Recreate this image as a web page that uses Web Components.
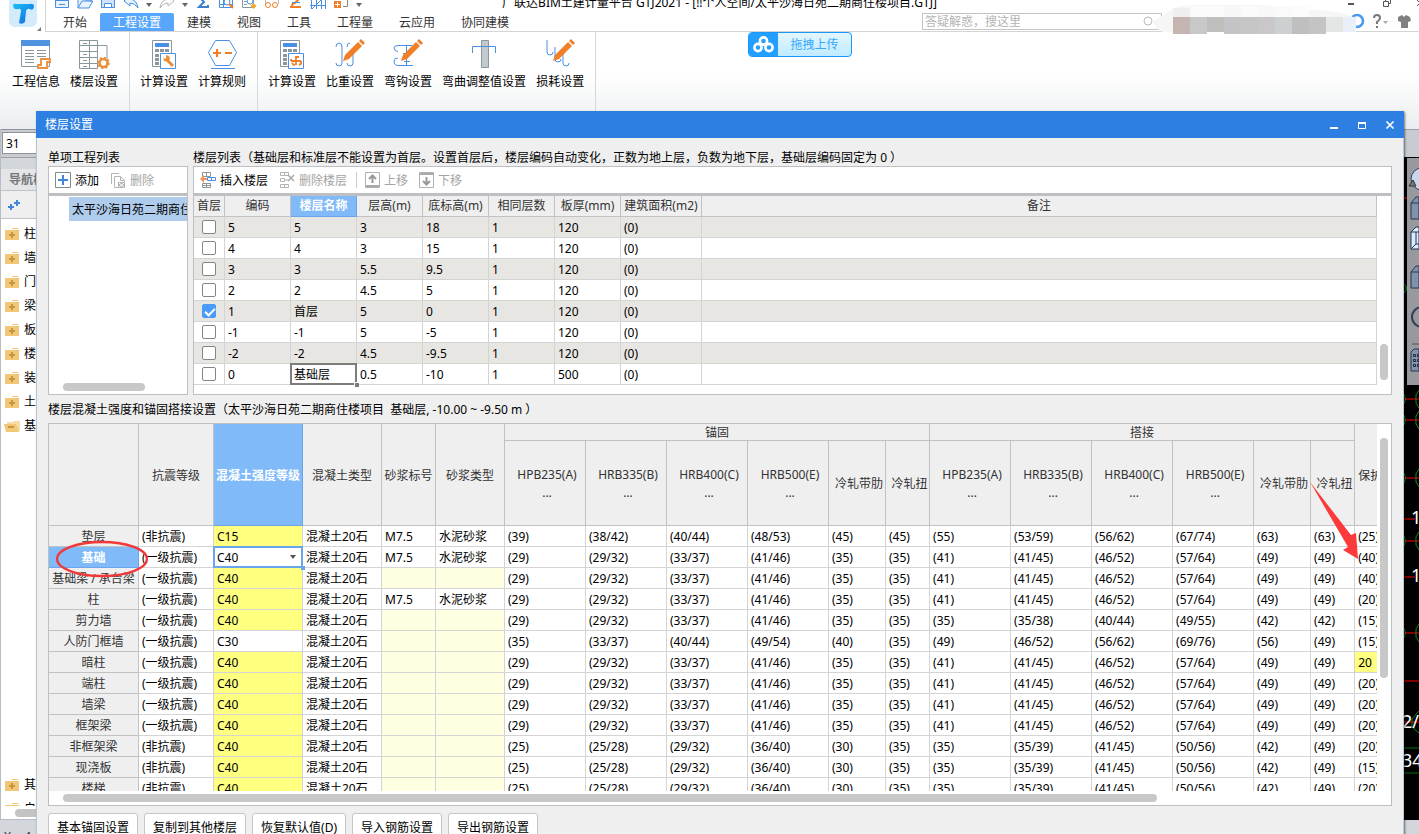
<!DOCTYPE html>
<html lang="zh-CN">
<head>
<meta charset="utf-8">
<title>广联达BIM土建计量平台 GTJ2021</title>
<style>
html,body{margin:0;height:100%;overflow:hidden}
body{font:12px/18px "Noto Sans","Noto Sans CJK SC",sans-serif;color:#000;background:#fff}
</style>
</head>
<body>
<app-shell></app-shell>
<script>
const RESET = `*{box-sizing:border-box}button,input,select{font:inherit;color:inherit;margin:0}svg{display:block;flex:none}:host([hidden]){display:none}`;
function define(name, css, html, setup) {
  customElements.define(name, class extends HTMLElement {
    connectedCallback() {
      if (this.shadowRoot) return;
      const root = this.attachShadow({ mode: 'open' });
      const markup = typeof html === 'function' ? html(this) : html;
      root.innerHTML = `<style>${RESET}${css}</style>${markup}`;
      if (setup) setup(root, this);
    }
  });
}
const svg = (w, h, body) => `<svg width="${w}" height="${h}" viewBox="0 0 ${w} ${h}" fill="none" aria-hidden="true">${body}</svg>`;
const B = '#4a90e2', O = '#f07f28', G = '#8b979e';
const pencil = `<path d="M9 22l2-6L24 3l4 4L15 20z" fill="${O}"/><path d="M25 2l2-2 4 4-2 2z" fill="${O}"/>`;
const calc = `<path d="M2.500 1.500h19v26h-19z" stroke="${G}" fill="#fff"/><path d="M5 4h14v4H5z" fill="${B}"/><path d="M5 10h4v3H5zM10 10h4v3h-4zM15 10h4v3h-4zM5 15h4v3H5zM5 19h4v3H5zM5 23h4v3H5z" fill="${G}"/><path d="M10.500 14.500h15v15h-15z" fill="#fff" stroke="${B}"/>`;

const ICONS = {
  info: svg(32, 32, `<path d="M1.500 1.500h28v26h-28z" fill="#fff" stroke="${G}"/><path d="M1 1h29v6H1z" fill="#4f92df"/><path d="M5 11.500h9M5 14.500h9M5 17.500h9M5 20.500h9M5 23.500h9M17 11.500h9M17 14.500h9M17 17.500h9" stroke="${G}"/><path d="M21 20h9v3h-3v6H18v-3h3z" fill="#fff" stroke="#e8903a" stroke-width="1.800"/>`),
  floors: svg(32, 32, `<path d="M1.500 1.500h18v28h-18zM1.500 6.500h18M1.500 12.500h18M1.500 18.500h18M1.500 24.500h18M11.500 1.500v28M20 6.500h9v14" stroke="${G}"/><path d="M5 4.500h4M5 15.500h4M5 21.500h4M5 27.500h4" stroke="${G}"/><circle cx="25.500" cy="24" r="4" fill="#fff" stroke="#e8903a" stroke-width="2.600"/><circle cx="25.500" cy="24" r="5.400" stroke="#e8903a" stroke-width="1.800" stroke-dasharray="2 2.200"/>`),
  calcSet: svg(28, 32, calc + `<path d="M16 20l7 7" stroke="#e8903a" stroke-width="3"/><path d="M13 18l1 4 4 1 2-3-1-3-3-1v3l-1 1z" fill="#e8903a"/>`),
  calcBar: svg(28, 32, calc + `<path d="M18 17v9M21 18h-3M13 22h10M14 24q1 2 3 2M21 26q3-1 2-4M13 20v2" stroke="${O}" stroke-width="1.800"/>`),
  rule: svg(32, 32, `<path d="M9.500 1.500h14l7 12-7 13h-14l-7-13z" stroke="${B}"/><path d="M5 29.500h24" stroke="${B}"/><path d="M7 14h8M11 10v8M19 14h7" stroke="${O}" stroke-width="2.200"/>`),
  weight: svg(32, 32, `<path d="M2 8q0-4 3-4t3 4v16q0 3-3 3t-3-3M13 8q0-4 3-4M19 12v12q0 3-3 3t-3-3" stroke="${B}"/>` + pencil),
  hook: svg(32, 32, `<path d="M20 6.500H6Q2 6.500 2 9t4 4M2 22q0-3 4-3M2 22q0 4.500 4 4.500h15M14.500 6v20M11 14.500h6M12 22.500h6" stroke="${B}"/>` + pencil),
  bend: svg(32, 32, `<path d="M13.500 1.500h7v27h-7z" fill="#c3c9cc" stroke="${G}"/><path d="M4.500 14V7.500h23V14" stroke="${B}"/>`),
  loss: svg(32, 32, `<path d="M3 1v12q0 3 3 3t3-3M11 8v12q0 3 3 3t3-3M19 14v10q0 3 3 3t3-3" stroke="${B}"/>` + pencil),
  add: svg(16, 16, `<path d="M.5.5h15v15H.5z" stroke="#7d8b93"/><path d="M3 8h10M8 3v10" stroke="#3f86dc" stroke-width="2"/>`),
  del: svg(16, 16, `<path d="M9 1.500H1.500V12M4.500 4.500h6l4 4v7h-10zM10.500 4.500v4h4" stroke="#b4b4b4"/><path d="M8 10h7v6H8z" fill="#b4b4b4"/><path d="M9 11l5 4M14 11l-5 4" stroke="#fff"/>`),
  insert: svg(16, 16, `<path d="M2.500.5h8v4h-8zM6.500.5v4M2.500 11.500h8v4h-8zM6.500 11v4M2.500 13.500h8" stroke="#8b979e"/><path d="M0 7l4-4v3h3v2H4v3z" fill="#f5935a"/><path d="M7.500 5.500h8v3h-8zM11.500 5.500v3" stroke="${B}"/>`),
  delFloor: svg(16, 16, `<path d="M1.500.5h8v3h-8zM5.500.5v3M1.500 12.500h8v3h-8zM5.500 12v3M1.500 6.500h4v3h-4zM6 8h3" stroke="#b4b4b4"/><path d="M9 3l6 6M15 3l-6 6" stroke="#aaa" stroke-width="1.600"/>`),
  up: svg(15, 16, `<path d="M.5.5h14v15H.5z" stroke="#b0b0b0"/><path d="M1 13h13v2H1z" fill="#aaa"/><path d="M7.500 11V4M4 7l3.500-3.500L11 7" stroke="#999" stroke-width="2"/>`),
  down: svg(15, 16, `<path d="M.5.5h14v15H.5z" stroke="#b0b0b0"/><path d="M1 1h13v2H1z" fill="#aaa"/><path d="M7.500 5v7M4 9l3.500 3.500L11 9" stroke="#999" stroke-width="2"/>`),
  folder: svg(16, 16, `<path d="M1 4h14v10H1z" fill="#f0c878"/><path d="M8 3V2h6v1z" fill="#f0c878"/><path d="M5 9h6M8 6v6" stroke="#c8963c" stroke-width="2"/>`),
  folderOpen: svg(16, 16, `<path d="M3 4h6l1-1h6v10H3z" fill="#f6dba6"/><path d="M0 6h12l3 8H2z" fill="#f0c878"/><path d="M4 9h6" stroke="#c8963c" stroke-width="2"/>`)
};

/* Ribbon */
define('ribbon-item',
  `:host{display:block}button{display:flex;flex-direction:column;align-items:center;gap:2px;border:0;background:none;padding:0 5px;white-space:nowrap}`,
  el => `<button type="button">${ICONS[el.getAttribute('icon')]}<slot></slot></button>`);

define('ribbon-group',
  `:host{display:flex;padding:7px 6px 0 5px;border-right:1px solid #d5d8da}`, `<slot></slot>`);

define('ribbon-bar',
  `:host{display:flex;height:97px;padding-left:2px;background:linear-gradient(#fff 45%,#eaedef)}`,
  `<ribbon-group><ribbon-item icon="info">工程信息</ribbon-item><ribbon-item icon="floors">楼层设置</ribbon-item></ribbon-group>
   <ribbon-group><ribbon-item icon="calcSet">计算设置</ribbon-item><ribbon-item icon="rule">计算规则</ribbon-item></ribbon-group>
   <ribbon-group><ribbon-item icon="calcBar">计算设置</ribbon-item><ribbon-item icon="weight">比重设置</ribbon-item><ribbon-item icon="hook">弯钩设置</ribbon-item><ribbon-item icon="bend">弯曲调整值设置</ribbon-item><ribbon-item icon="loss">损耗设置</ribbon-item></ribbon-group>`);

/* Quick access row with the window title */
const caret = svg(6, 16, `<path d="M0 9h6l-3 4z" fill="#666"/>`);
define('quick-bar',
  `:host{display:flex;align-items:center;height:20px;margin-top:-8px;padding:0 0 0 8px;position:relative}
   .icons{display:flex;gap:7px}.title{flex:1;text-align:center;white-space:nowrap;padding:1px 268px 0 0}
   .win{display:flex;gap:20px;margin-right:-6px}`,
  `<div class="icons">
   ${svg(16,16,`<path d="M1.500 1.500h13v12h-13zM1.500 6.500h13M5 10.500h6" stroke="${B}" fill="#e8f2fd"/>`)}
   ${svg(16,16,`<path d="M1 14V4h6l1 2h6v2M1 14l4-7h11l-4 7z" stroke="${B}" fill="#e8f2fd"/>`)}
   ${svg(16,16,`<path d="M1.500 1.500h13v12h-13z" stroke="${B}" fill="#cfe3fa"/><path d="M4.500 9.500h7v4h-7z" fill="#fff" stroke="${B}"/>`)}
   ${svg(16,16,`<path d="M1 7l6-5v3q7 1 8 9-3-5-8-5v3z" stroke="${B}" fill="#e8f2fd"/>`)}
   ${caret}
   ${svg(16,16,`<path d="M15 7L9 2v3Q2 6 1 14q3-5 8-5v3z" stroke="#b5b5b5"/>`)}
   ${caret}
   ${svg(16,16,`<path d="M13 3H4l5 5-5 5h9v-2" stroke="#3d7fcf" stroke-width="2"/>`)}
   ${svg(16,16,`<path d="M1.500 1.500h13v12h-13zM1 10.500h13M5.500 1v13" stroke="${B}"/><circle cx="9" cy="8" r="3" fill="#fff" stroke="${B}"/><path d="M11 10l4 4" stroke="${O}" stroke-width="2"/>`)}
   ${svg(16,16,`<path d="M1.500 1.500h11v12h-11zM3 7.500h3M3 10.500h3" stroke="${G}"/><circle cx="9" cy="7" r="3" fill="#fff" stroke="${B}"/><path d="M12.500 9l3 3-3 3-3-3z" fill="#f5a623"/>`)}
   ${svg(16,16,`<path d="M1.500 10V3.500h13V10" stroke="#bbb"/><circle cx="4" cy="11" r="2.500" stroke="${O}"/><circle cx="11" cy="11" r="2.500" stroke="${O}"/>`)}
   ${svg(16,16,`<path d="M3 13h11M5 12q0-3 3-3l4-4" stroke="${O}" stroke-width="2"/><path d="M5 8.500h8" stroke="${B}"/>`)}
   ${svg(16,16,`<path d="M1.500 1v14M6.500 1v14M11.500 1v14M15.500 1v14M0 5.500h16M0 11.500h16M2 15L15 2" stroke="${B}"/>`)}
   ${svg(16,16,`<path d="M5 1.500h9.500v11H10" stroke="#888"/><path d="M1 7h7v7H1z" fill="${O}"/><path d="M2 10.500h5M4.500 8v5" stroke="#fff"/>`)}
   ${caret}</div>
   <div class="title">广联达BIM土建计量平台 GTJ2021 - [!!个人空间/太平沙海日苑二期商住楼项目.GTJ]</div>
   <div class="win">${svg(16,16,`<path d="M3 10h6" stroke="#555" stroke-width="2"/>`)}${svg(16,16,`<path d="M2.500 7.500h5v5h-5zM4.500 7V4.500h5v5H8" stroke="#555"/>`)}${svg(8,16,`<path d="M0 6l6 6M6 6l-6 6" stroke="#555"/>`)}</div>`);

define('menu-tab',
  `:host{display:block}a{display:block;height:18px;line-height:20px;padding:0 13px;color:#333;text-decoration:none;white-space:nowrap}
   :host([active]) a{background:#58a6fb;color:#fff;border-radius:2px 2px 0 0}`,
  `<a href="#"><slot></slot></a>`);

const mosaicColors = ['#c4b5b1','#c8c8c9','#bebfbd','#c3c4c5','#c6c6c7','#c9c7c9','#cdd0d1','#bfbfc0','#c4c4c4','#e3e6e5','#e9f0fb'];
const mosaicTops = ['#efefef','#fafafa','#fbfbfb','#f7f7f7','#fbfbfb','#f8f8f8','#fafafa','#fcfcfc'];
define('menu-row',
  `:host{display:flex;height:19px;padding-left:4px;border-bottom:1px solid #d4d4d4;position:relative}
   nav{display:flex;flex:1}
   .search{width:240px;height:17px;border:1px solid #c4c4c4;display:flex;align-items:center;padding-right:2px}
   input{border:0;outline:0;background:none;width:100%;padding:1px 2px 0;height:15px}input::placeholder{color:#b4b4b4}
   .user{width:208px;position:relative}.user svg{position:absolute;left:-9px;top:-8px}
   .tools{display:flex;width:49px;gap:9px}`,
  `<nav><menu-tab>开始</menu-tab><menu-tab active>工程设置</menu-tab><menu-tab>建模</menu-tab><menu-tab>视图</menu-tab><menu-tab>工具</menu-tab><menu-tab>工程量</menu-tab><menu-tab>云应用</menu-tab><menu-tab>协同建模</menu-tab></nav>
   <label class="search"><input type="search" aria-label="搜索" placeholder="答疑解惑，搜这里">${svg(16,14,`<circle cx="5" cy="6" r="4" stroke="#bbb"/>`)}</label>
   <div class="user">${svg(216,30,`<circle cx="204" cy="16" r="6" stroke="#4a9af0" stroke-width="2.500"/><path d="M0 16Q12 10 20 3Q30 0 40 0H110L150 4Q190 6 200 12V26Q196 28 190 27H10Q2 24 0 16z" fill="#f6f6f6"/>` + mosaicTops.map((c,i)=>`<path d="M${20+i*17} ${i===0?3:1}h17v11h-17z" fill="${c}"/>`).join('') + mosaicColors.map((c,i)=>`<path d="M${20+i*17} 12h${i===10?13:17}v${i===2||i>8?15:17}h-${i===10?13:17}z" fill="${c}"/>`).join(''))}</div>
   <div class="tools">${svg(18,18,`<path d="M4 5q0-3 3-3t3 3q0 2-3 4v2M7 13v2" stroke="#777" stroke-width="2"/><path d="M13 8h5l-2.500 3z" fill="#aaa"/>`)}${svg(18,18,`<path d="M1 4l4-2 2 2 2-2 4 2 1 4-3 1v6H4V9L1 8z" fill="#808080"/>`)}</div>`);

define('app-header',
  `:host{display:grid;grid-template-columns:46px 1fr;height:32px}
   .logo{padding-left:9px;border-right:1px solid #d4d4d4}.main{min-width:0;display:flex;flex-direction:column;gap:1px}`,
  `<div class="logo">${svg(34,31,`<defs><linearGradient id="g" x1="0" y1="0" x2="1" y2="1"><stop stop-color="#17c3f5"/><stop offset="1" stop-color="#1560e0"/></linearGradient></defs><rect y="-8" width="28" height="35" rx="6" fill="#d3ebfa"/><path d="M4 5q1-2 4-1h13q4-1 4 3-1 4-4 2-3-1-4 2l-1 11q-3 3-6 1l2-12q0-3-3-2-5 1-5-4z" fill="url(#g)"/><path d="M32 27v4h-4z" fill="#777"/>`)}</div>
   <div class="main"><quick-bar></quick-bar><menu-row></menu-row></div>`);

define('upload-badge',
  `:host{position:absolute;left:748px;top:32px}
   button{display:flex;align-items:center;width:104px;height:25px;padding:0;border:1px solid #1b97f8;border-radius:4px;background:linear-gradient(#e4f6ff,#c0ebff);color:#35a8fa;overflow:hidden}
   .mark{background:#23a0ff;height:25px;display:flex;align-items:center;padding:0 4px}.text{flex:1}`,
  `<button type="button"><span class="mark">${svg(21,18,`<g stroke="#fff" stroke-width="2.600"><circle cx="10.500" cy="5" r="3.600"/><circle cx="5" cy="11.500" r="3.600"/><circle cx="16" cy="11.500" r="3.600"/></g>`)}</span><span class="text"><slot></slot></span></button>`);

/* Navigation panel */
define('nav-item',
  `:host{display:flex;align-items:center;height:24px;gap:4px;padding-left:3px;flex:none}`,
  el => `${ICONS[el.hasAttribute('open') ? 'folderOpen' : 'folder']}<slot></slot>`);

define('nav-panel',
  `:host{display:flex;flex-direction:column;width:160px;background:#d3d6db;border-left:1px solid #b7bcc6}
   .combo{height:28px;padding:2px 1px;border-top:1px solid #8e9196;background:#c9ccd0}
   .combo input{width:120px;height:22px;border:1px solid #8e9196;background:#fff;padding:0 3px;display:block}
   .gap{height:12px;border-top:1px solid #9da1a6}
   .head{height:22px;background:#e4e5e8;color:#777;font-weight:bold;padding:2px 8px;border-bottom:1px solid #bfc3c8}
   .tools{height:28px;background:#efefef;border-bottom:1px solid #bfc3c8;padding:6px}
   .list{flex:1;min-height:0;background:#fff;padding-top:3px;display:flex;flex-direction:column}
   .rest{margin-top:auto;height:33px;overflow:hidden}
   .bar{height:14px;background:#fff;padding:3px 0 0 14px;border-bottom:1px solid #b7bcc6}.bar div{height:8px;border-radius:4px;background:#c4c4c4}`,
  `<div class="combo"><input value="31" aria-label="图层"></div><div class="gap"></div>
   <div class="head">导航栏</div>
   <div class="tools">${svg(16,16,`<path d="M1 10h6M4 7v6M7 6h6M10 3v6" stroke="#3f86dc" stroke-width="2"/>`)}</div>
   <div class="list">${['柱','墙','门','梁','板','楼','装','土'].map(t=>`<nav-item>${t}</nav-item>`).join('')}<nav-item open>基</nav-item>
   <div class="rest"><nav-item>其</nav-item><nav-item>自</nav-item></div></div>
   <div class="bar"><div></div></div>`);

/* Drawing canvas strip at the right edge */
const hex = y => `<path d="M0 ${y-5}q3 5 0 10M15 ${y-9}l-3 5v8l3 5" stroke="#0a8a1a"/>`;
define('cad-view',
  `:host{flex:1;display:flex;flex-direction:column;align-items:flex-end;background:#c8cbd1;border-top:1px solid #9da1a6}
   .canvas{flex:1;min-height:0;width:100%;margin-top:27px;background:#000;display:flex;justify-content:flex-end;overflow:hidden}
   text{font:18px "Noto Sans",sans-serif;fill:#fff}`,
  `<div class="canvas">${svg(15,664,
    [242,263,321,384,476].map(y=>`<path d="M0 ${y}h15" stroke="#f00"/>${hex(y)}`).join('') +
    `<path d="M0 41h3M0 362h11M0 420h11M0 524h15" stroke="#f00"/><path d="M0 565h15" stroke="#f00"/><path d="M0 591h15M0 616h15" stroke="#0a6a1a"/><path d="M15 554l-7 8v8l7 6" stroke="#0a8a1a"/><path d="M0 127q5 4 0 9" stroke="#0a8a1a"/>
     <text x="7" y="367">1</text><text x="7" y="425">1</text><text x="-2" y="571">2/</text><text x="-2" y="610">34</text>
     <path d="M3 1h12v227H3z" fill="#97999d"/>
     <circle cx="18" cy="22" r="11" fill="#c7d7ec" stroke="#333e55"/><path d="M5 29l4-6 3 6z" fill="#777" stroke="#333"/>
     <path d="M7 46l5-6h3v22H7zM7 46h8" fill="#8093ad" stroke="#2a3550"/><path d="M7 75l5-5h3v22H7z" fill="#d6ebff" stroke="#2a3550"/><path d="M7 75h8M12 75v12l-5 5M12 87h3" stroke="#2a3550"/>
     <path d="M7 115l5-6h3v22H7zM7 115h8" fill="#8093ad" stroke="#2a3550"/><circle cx="18" cy="160" r="10" stroke="#333e55" stroke-width="2"/><path d="M8 187h7" stroke="#555"/>
     <path d="M7 195l3-3h5v22H7z" fill="#8093ad" stroke="#2a3550"/><path d="M9.500 197.500h2v2h-2zM9.500 202.500h2v2h-2zM9.500 207.500h2v2h-2zM13.500 197.500h2v2h-2zM13.500 202.500h2v2h-2zM13.500 207.500h2v2h-2z" stroke="#1f2940"/>`)}</div>`);

/* Dialog parts */
define('tool-button',
  `:host{display:block}button{display:flex;align-items:center;gap:4px;height:22px;padding:0 5px 0 3px;border:0;background:none;white-space:nowrap}button:disabled{color:#a4a4a4}span{padding-top:2px}`,
  el => `<button type="button"${el.hasAttribute('disabled') ? ' disabled' : ''}>${ICONS[el.getAttribute('icon')]}<span><slot></slot></span></button>`);

define('tool-strip',
  `:host{display:flex;align-items:center;gap:3px;height:28px;padding-left:3px;background:#fff;border:1px solid #bdbfc2;overflow:hidden}`, `<slot></slot>`);

define('project-list',
  `:host{display:flex;flex-direction:column;height:201px;border:1px solid #bdbfc2;border-top-width:2px;background:#fff;overflow:hidden}
   .node{margin:1px 0 0 20px;height:24px;line-height:24px;padding:1px 0 0 3px;background:#b0cced;white-space:nowrap;overflow:hidden}
   .thumb{margin:auto 0 3px 14px;width:82px;height:8px;border-radius:4px;background:#c8c8c8}`,
  `<div class="node">太平沙海日苑二期商住</div><div class="thumb"></div>`);

const floors = [
  ['5','5','3','18'],['4','4','3','15'],['3','3','5.5','9.5'],['2','2','4.5','5'],['1','首层','5','0'],['-1','-1','5','-5'],['-2','-2','4.5','-9.5'],['0','基础层','0.5','-10']
];
const TABLE = `table{border-collapse:separate;border-spacing:0;table-layout:fixed}
 th,td{padding:2px 0 0 3px;border:0 solid #d4d4d4;border-width:0 1px 1px 0;height:21px;line-height:18px;text-align:left;white-space:nowrap;overflow:hidden}
 th{background:#efefef;color:#333;font-weight:normal;text-align:center;padding:2px 0 0;border-color:#c2c2c2}
 .sel{background:#80baf9;color:#fff;font-weight:bold;border-color:#6aa6ee}
 .frame{background:#fff;border:1px solid #bdbfc2}.thumb{background:#c8c8c8;border-radius:4px}`;

define('floor-table',
  `${TABLE}:host{display:block}
   .frame{display:grid;grid-template-columns:minmax(0,1fr) 14px;height:201px;border-top-width:2px}
   table{width:100%;align-self:start}thead th{padding-top:0}
   tbody tr:nth-child(odd) td{background:#e8e6e2}td:first-child{padding:0}
   input{appearance:none;display:block;width:14px;height:14px;margin:0 auto;border:1px solid #858585;border-radius:2px;background:#fff;position:relative}
   input:checked{background:#4a9cf8;border-color:#4a9cf8}
   input:checked::after{content:"";position:absolute;left:4px;top:1px;width:4px;height:8px;border:solid #fff;border-width:0 2px 2px 0;transform:rotate(45deg)}
   td.current{position:relative;overflow:visible}
   td.current::before{content:"";position:absolute;inset:-1px;border:2px solid #7d7d7d;pointer-events:none}
   td.current::after{content:"";position:absolute;right:-3px;bottom:-3px;width:4px;height:4px;background:#7d7d7d;border:solid #fff;border-width:1px 0 0 1px;box-sizing:content-box}
   .thumb{width:8px;height:36px;margin:auto 3px 14px}`,
  `<div class="frame"><table><colgroup><col style="width:31px"><col style="width:66px"><col style="width:66px"><col style="width:66px"><col style="width:66px"><col style="width:66px"><col style="width:66px"><col style="width:81px"><col></colgroup>
   <thead><tr><th>首层</th><th>编码</th><th class="sel">楼层名称</th><th>层高(m)</th><th>底标高(m)</th><th>相同层数</th><th>板厚(mm)</th><th>建筑面积(m2)</th><th>备注</th></tr></thead>
   <tbody>${floors.map((f,i)=>`<tr><td><input type="checkbox" aria-label="首层 ${f[0]}"${i===4?' checked':''}></td><td>${f[0]}</td><td${i===7?' class="current"':''}>${f[1]}</td><td>${f[2]}</td><td>${f[3]}</td><td>1</td><td>${i===7?500:120}</td><td>(0)</td><td></td></tr>`).join('')}</tbody></table><div class="thumb"></div></div>`);

const first = '(29) (29/32) (33/37) (41/46) (35) (35) ';
const full = first + '(41) (41/45) (46/52) (57/64) (49) (49) ';
const plain = '(25) (25/28) (29/32) (36/40) (30) (35) (35) (35/39) (41/45) (50/56) (42) (49) ';
const members = [
  ['垫层','(非抗震)','C15',1,'(39) (38/42) (40/44) (48/53) (45) (45) (55) (53/59) (56/62) (67/74) (63) (63) (25)'],
  ['基础','(一级抗震)','C40',1,full+'(40)'],
  ['基础梁 / 承台梁','(一级抗震)','C40',0,full+'(40)'],
  ['柱','(一级抗震)','C40',1,full+'(20)'],
  ['剪力墙','(一级抗震)','C40',0,first+'(35) (35/38) (40/44) (49/55) (42) (42) (15)'],
  ['人防门框墙','(一级抗震)','C30',0,'(35) (33/37) (40/44) (49/54) (40) (35) (49) (46/52) (56/62) (69/76) (56) (49) (15)'],
  ['暗柱','(一级抗震)','C40',0,full+'20'],
  ['端柱','(一级抗震)','C40',0,full+'(20)'],
  ['墙梁','(一级抗震)','C40',0,full+'(20)'],
  ['框架梁','(一级抗震)','C40',0,full+'(20)'],
  ['非框架梁','(非抗震)','C40',0,plain+'(20)'],
  ['现浇板','(非抗震)','C40',0,plain+'(15)'],
  ['楼梯','(非抗震)','C40',0,plain+'(20)']
];
const barHeads = ['HPB235(A)<br>...','HRB335(B)<br>...','HRB400(C)<br>...','HRB500(E)<br>...','冷轧带肋','冷轧扭'].map(h=>`<th>${h}</th>`).join('');
const memberRow = ([name,quake,grade,mortar,values]) => {
  const selected = name === '基础';
  const gradeCell = selected
    ? `<td class="edit"><select aria-label="混凝土强度等级"><option>C40</option></select></td>`
    : `<td${grade==='C30'?'':' class="changed"'}>${grade}</td>`;
  return `<tr><th${selected?' class="sel"':''}>${name}</th><td>${quake}</td>${gradeCell}<td>混凝土20石</td>` +
    (mortar ? '<td>M7.5</td><td>水泥砂浆</td>' : '<td class="na"></td><td class="na"></td>') +
    values.split(' ').map(v=>`<td${v==='20'?' class="changed"':''}>${v}</td>`).join('') + '</tr>';
};
define('anchor-table',
  `${TABLE}:host{display:flex;flex-direction:column;min-height:0}
   .frame{flex:1;min-height:0;display:grid;grid-template-columns:minmax(0,1fr) 14px;grid-template-rows:minmax(0,1fr) 14px}
   .view{overflow:hidden}table{width:1388px}
   thead tr:first-child th{height:17px;line-height:14px}thead tr:last-child th{height:85px;padding-left:4px}
   thead th[rowspan]{line-height:18px!important}th.cover{text-align:left;padding-left:3px}
   .changed{background:#ffff80}.na{background:#ffffe1}
   td.edit{position:relative;overflow:visible;padding:0}
   select{appearance:none;display:block;width:100%;height:20px;border:0;padding:2px 0 0 3px;background:#fff;outline:2px solid #68a5ea;outline-offset:-1px;border-radius:0}
   .edit::before{content:"";position:absolute;right:6px;top:8px;border:3px solid transparent;border-top:4px solid #555;border-bottom:0}
   .edit::after{content:"";position:absolute;right:-3px;bottom:-3px;width:4px;height:4px;background:#68a5ea}
   .v{width:8px;height:240px;margin:14px 3px 0}.h{height:8px;margin:3px 234px 0 14px;grid-column:1/3}`,
  `<div class="frame"><div class="view"><table><colgroup>${[90,75,89,79,54,69,81,81,81,81,57,44,81,81,81,81,57,44,82].map(w=>`<col style="width:${w}px">`).join('')}</colgroup>
   <thead><tr><th rowspan="2"></th><th rowspan="2">抗震等级</th><th rowspan="2" class="sel">混凝土强度等级</th><th rowspan="2">混凝土类型</th><th rowspan="2">砂浆标号</th><th rowspan="2">砂浆类型</th><th colspan="6">锚固</th><th colspan="6">搭接</th><th rowspan="2" class="cover">保护</th></tr><tr>${barHeads}${barHeads}</tr></thead>
   <tbody>${members.map(memberRow).join('')}</tbody></table></div><div class="thumb v"></div><div class="thumb h"></div></div>`);

define('push-button',
  `:host{display:block}button{height:28px;padding:1px 8px 0;border:1px solid #c6c6c6;border-radius:3px;background:#fff;white-space:nowrap}`,
  `<button type="button"><slot></slot></button>`);

define('floor-dialog',
  `:host{position:absolute;left:36px;right:15px;top:111px;bottom:-7px;display:flex;flex-direction:column;background:#efefef;box-shadow:1px 1px 2px rgba(0,0,0,.5)}
   header{display:flex;align-items:center;height:27px;padding:0 8px 0 9px;background:#2d7fe2;color:#fff;flex:none}
   header span{flex:1;padding-top:1px}header button{border:0;background:none;padding:0;margin-left:16px;display:block}
   main{flex:1;min-height:0;display:flex;flex-direction:column;padding:10px 11px 0;border:solid #b9c6d6;border-width:0 1px}
   .lists{display:grid;grid-template-columns:140px minmax(0,1fr);column-gap:5px}
   .label{height:18px;line-height:20px;white-space:nowrap}.mid{margin:5px 0;white-space:pre}
   .sep{width:1px;height:16px;background:#ccc;margin:0 2px 0 1px}
   anchor-table{flex:1}
   footer{display:flex;gap:6px;margin-top:7px;flex:none}
   .mark{position:absolute;pointer-events:none}`,
  `<header><span>楼层设置</span>
   <button type="button" aria-label="最小化">${svg(12,12,`<path d="M2 9h8" stroke="#fff" stroke-width="2"/>`)}</button>
   <button type="button" aria-label="最大化">${svg(12,12,`<path d="M2.500 3.500h7v6h-7z" stroke="#fff"/><path d="M2 3h8v2H2z" fill="#fff"/>`)}</button>
   <button type="button" aria-label="关闭">${svg(12,12,`<path d="M2.500 2.500l7 7M9.500 2.500l-7 7" stroke="#fff" stroke-width="1.700"/>`)}</button></header>
   <main><div class="lists">
     <section><div class="label">单项工程列表</div><tool-strip><tool-button icon="add">添加</tool-button><tool-button icon="del" disabled>删除</tool-button></tool-strip><project-list></project-list></section>
     <section><div class="label">楼层列表（基础层和标准层不能设置为首层。设置首层后，楼层编码自动变化，正数为地上层，负数为地下层，基础层编码固定为 0 ）</div>
       <tool-strip><tool-button icon="insert">插入楼层</tool-button><tool-button icon="delFloor" disabled>删除楼层</tool-button><div class="sep"></div><tool-button icon="up" disabled>上移</tool-button><tool-button icon="down" disabled>下移</tool-button></tool-strip><floor-table></floor-table></section>
   </div>
   <div class="label mid">楼层混凝土强度和锚固搭接设置（太平沙海日苑二期商住楼项目  基础层, -10.00 ~ -9.50 m ）</div>
   <anchor-table></anchor-table>
   <footer><push-button>基本锚固设置</push-button><push-button>复制到其他楼层</push-button><push-button>恢复默认值(D)</push-button><push-button>导入钢筋设置</push-button><push-button>导出钢筋设置</push-button></footer></main>
   <svg class="mark" style="left:18px;top:428px" width="96" height="42" fill="none"><ellipse cx="48" cy="20" rx="45" ry="17" stroke="#f23838" stroke-width="2.400"/></svg>
   <svg class="mark" style="left:1274px;top:370px" width="50" height="80"><path d="M0 1L41 54l5-2 2 26-15-9 5-3z" fill="#fb3b3b"/></svg>`);

define('app-shell',
  `:host{display:flex;flex-direction:column;height:100vh;position:relative;overflow:hidden}
   .work{flex:1;min-height:0;display:flex}.status{height:14px;background:#d3d6db;padding:10px 4px 0;white-space:pre;line-height:14px;color:#333;overflow:hidden}`,
  `<app-header></app-header><ribbon-bar></ribbon-bar>
   <div class="work"><nav-panel></nav-panel><cad-view></cad-view></div><div class="status">X = 4</div>
   <upload-badge>拖拽上传</upload-badge><floor-dialog></floor-dialog>`);
</script>
</body>
</html>
